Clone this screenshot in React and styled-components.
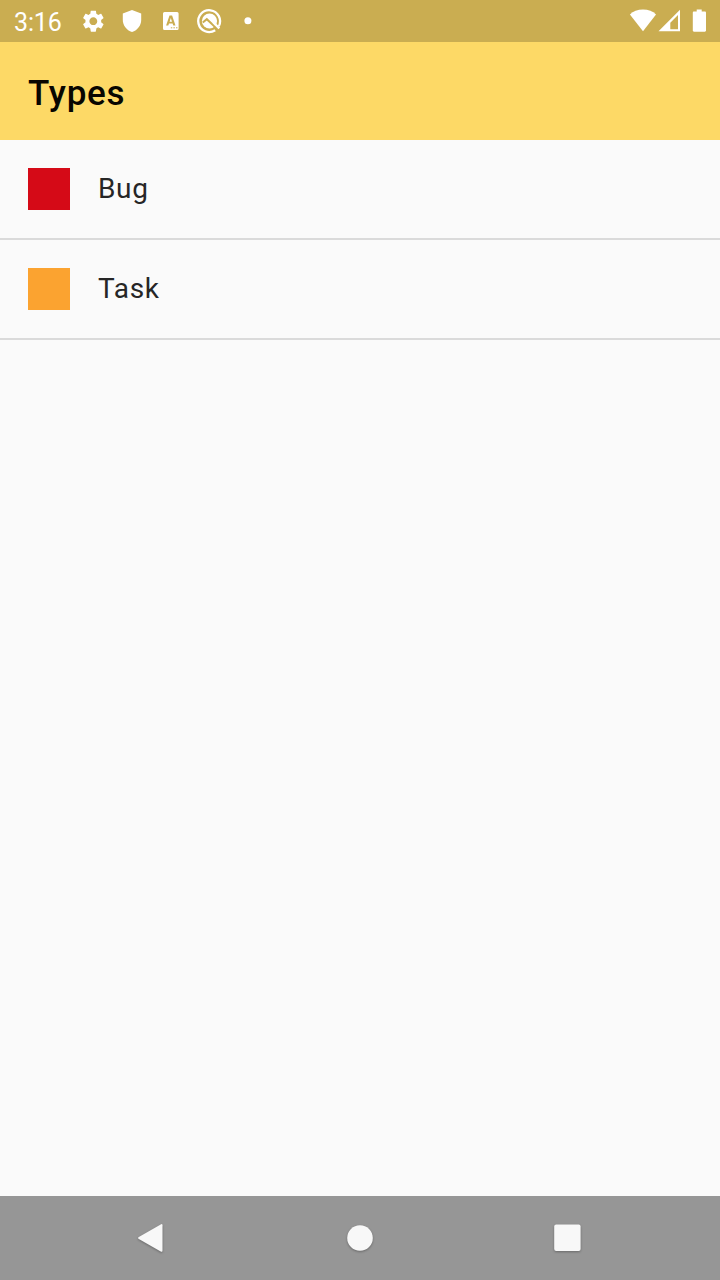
import React from "react";
import styled, { createGlobalStyle } from "styled-components";

const GlobalStyle = createGlobalStyle`
  * { box-sizing: border-box; }
  body { margin: 0; background: #fafafa; }
`;

const Screen = styled.div`
  display: flex;
  flex-direction: column;
  width: 720px;
  height: 1280px;
  overflow: hidden;
  background: #fafafa;
  font-family: Roboto, sans-serif;
`;

const StatusBar = styled.header`
  display: flex;
  align-items: center;
  justify-content: space-between;
  flex: none;
  height: 42px;
  padding: 0 6px 0 14px;
  background: #caad51;
  color: #fff;
`;

const StatusGroup = styled.div`
  display: flex;
  align-items: center;
`;

const Clock = styled.time`
  width: 60px;
  padding-top: 3px;
  font-size: 25px;
  line-height: 30px;
  letter-spacing: -0.15px;
`;

const StatusIcon = styled.svg`
  display: block;
  flex: none;
  width: ${(p) => p.$width}px;
  height: 42px;
  fill: #fff;
`;

const AppBar = styled.div`
  display: flex;
  align-items: center;
  flex: none;
  height: 98px;
  padding: 5px 28px 0;
  background: #fdd966;
`;

const Title = styled.h1`
  margin: 0;
  font-size: 35px;
  font-weight: 500;
  line-height: 42px;
  letter-spacing: 0.75px;
  color: #080600;
`;

const TypeList = styled.ul`
  flex: 1;
  margin: 0;
  padding: 0;
  list-style: none;
`;

const TypeRow = styled.li`
  display: flex;
  align-items: center;
  gap: 28px;
  height: 100px;
  padding: 0 28px;
  border-bottom: 2px solid #dadada;
`;

const Swatch = styled.span`
  width: 42px;
  height: 42px;
  background: ${(p) => p.$color};
`;

const TypeName = styled.span`
  font-size: 28px;
  line-height: 42px;
  letter-spacing: 0.65px;
  color: #262626;
`;

const NavBar = styled.nav`
  display: flex;
  justify-content: center;
  flex: none;
  height: 84px;
  background: #969696;
`;

const NavButton = styled.button`
  width: 207px;
  height: 84px;
  padding: 0;
  border: 0;
  background: none;
`;

const NavIcon = styled.svg`
  display: block;
  width: 60px;
  height: 84px;
  margin: 0 auto;
  fill: #f8f8f8;
  filter: drop-shadow(0 1px 1px rgba(0, 0, 0, 0.3));
`;

const types = [
  { name: "Bug", color: "#d50a17" },
  { name: "Task", color: "#fba330" },
];

export default function App() {
  return (
    <Screen>
      <GlobalStyle />
      <StatusBar>
        <StatusGroup>
          <Clock>3:16</Clock>
          <StatusIcon $width={38.5} viewBox="0 0 38.5 42">
            <path
              transform="translate(6.2 8) scale(1.094)"
              d="M19.14 12.94c.04-.3.06-.61.06-.94 0-.32-.02-.64-.07-.94l2.03-1.58c.18-.14.23-.41.12-.61l-1.92-3.32c-.12-.22-.37-.29-.59-.22l-2.39.96c-.5-.38-1.03-.7-1.62-.94L14.4 2.81c-.04-.24-.24-.41-.48-.41h-3.84c-.24 0-.43.17-.47.41l-.36 2.54c-.59.24-1.13.57-1.62.94l-2.39-.96c-.22-.08-.47 0-.59.22L2.74 8.87c-.12.21-.08.47.12.61l2.03 1.58c-.05.3-.09.63-.09.94s.02.64.07.94l-2.03 1.58c-.18.14-.23.41-.12.61l1.92 3.32c.12.22.37.29.59.22l2.39-.96c.5.38 1.03.7 1.62.94l.36 2.54c.05.24.24.41.48.41h3.84c.24 0 .44-.17.47-.41l.36-2.54c.59-.24 1.13-.56 1.62-.94l2.39.96c.22.08.47 0 .59-.22l1.92-3.32c.12-.22.07-.47-.12-.61l-2.01-1.58zM12 15.6c-1.98 0-3.6-1.62-3.6-3.6s1.62-3.6 3.6-3.6 3.6 1.62 3.6 3.6-1.62 3.6-3.6 3.6z"
            />
          </StatusIcon>
          <StatusIcon $width={38.5} viewBox="0 0 38.5 42">
            <path d="M19 10 28.200 13.500V20c0 5.300-3.600 10.300-9.200 12-5.600-1.700-9.200-6.700-9.200-12V13.500z" />
          </StatusIcon>
          <StatusIcon $width={38.5} viewBox="0 0 38.5 42">
            <path
              fillRule="evenodd"
              d="M13.500 12h12.600a1.500 1.500 0 0 1 1.500 1.500v15a1.500 1.500 0 0 1-1.500 1.500H13.500a1.500 1.500 0 0 1-1.500-1.500V13.500a1.500 1.500 0 0 1 1.500-1.500zM18.500 15.600 15.100 25.600h2.200l.7-2.200h3.600l.7 2.200h2.200L21.100 15.600zM19.800 18.100 21 21.700h-2.400z"
            />
            <path d="M19.800 27.800h1.500M22.400 27.800h1.500M25 27.800h1.500" stroke="#caad51" strokeWidth="1" />
          </StatusIcon>
          <StatusIcon $width={38.5} viewBox="0 0 38.5 42">
            <path
              d="M25.200 30.200A10.900 10.900 0 1 1 28.800 26.200"
              fill="none"
              stroke="#fff"
              strokeWidth="2.300"
            />
            <circle cx="19.500" cy="21" r="7.600" />
            <path
              d="M12.800 22.600 16.800 19.200 26.200 28"
              fill="none"
              stroke="#caad51"
              strokeWidth="2"
            />
            <path d="M23.500 22.500 29.300 28.300" stroke="#fff" strokeWidth="2.400" />
          </StatusIcon>
          <StatusIcon $width={38.5} viewBox="0 0 38.5 42">
            <circle cx="19.900" cy="20.700" r="3.500" />
          </StatusIcon>
        </StatusGroup>
        <StatusGroup>
          <StatusIcon $width={28} viewBox="0 0 28 42">
            <path d="M14 31.200.9 14.500C4 11.500 8.800 9.600 14 9.600s10 1.900 13 4.900z" />
          </StatusIcon>
          <StatusIcon $width={30} viewBox="0 0 30 42">
            <path
              fillRule="evenodd"
              d="M1.500 31.200 23 9.800V31.200zM13.300 29.200H21V15L13.300 22.700z"
            />
          </StatusIcon>
          <StatusIcon $width={27} viewBox="0 0 27 42">
            <path d="M9.700 9.400h5v2.100h3.100c.7 0 1.200.5 1.200 1.200v17.900c0 .7-.5 1.200-1.200 1.200H7c-.7 0-1.200-.5-1.200-1.200V12.700c0-.7.500-1.200 1.200-1.200h2.700z" />
          </StatusIcon>
        </StatusGroup>
      </StatusBar>
      <AppBar>
        <Title>Types</Title>
      </AppBar>
      <TypeList>
        {types.map((type) => (
          <TypeRow key={type.name}>
            <Swatch $color={type.color} />
            <TypeName>{type.name}</TypeName>
          </TypeRow>
        ))}
      </TypeList>
      <NavBar>
        <NavButton aria-label="Back">
          <NavIcon viewBox="0 0 60 84">
            <path d="M15.800 41.100 37.700 28.400Q39.500 27.400 39.500 29.300V54.500Q39.500 56.400 37.700 55.400L15.800 42.900Q14.300 42 15.800 41.100z" />
          </NavIcon>
        </NavButton>
        <NavButton aria-label="Home">
          <NavIcon viewBox="0 0 60 84">
            <circle cx="30" cy="42" r="12.800" />
          </NavIcon>
        </NavButton>
        <NavButton aria-label="Recent apps">
          <NavIcon viewBox="0 0 60 84">
            <rect x="17.200" y="28.600" width="26.400" height="26.400" rx="2" />
          </NavIcon>
        </NavButton>
      </NavBar>
    </Screen>
  );
}
